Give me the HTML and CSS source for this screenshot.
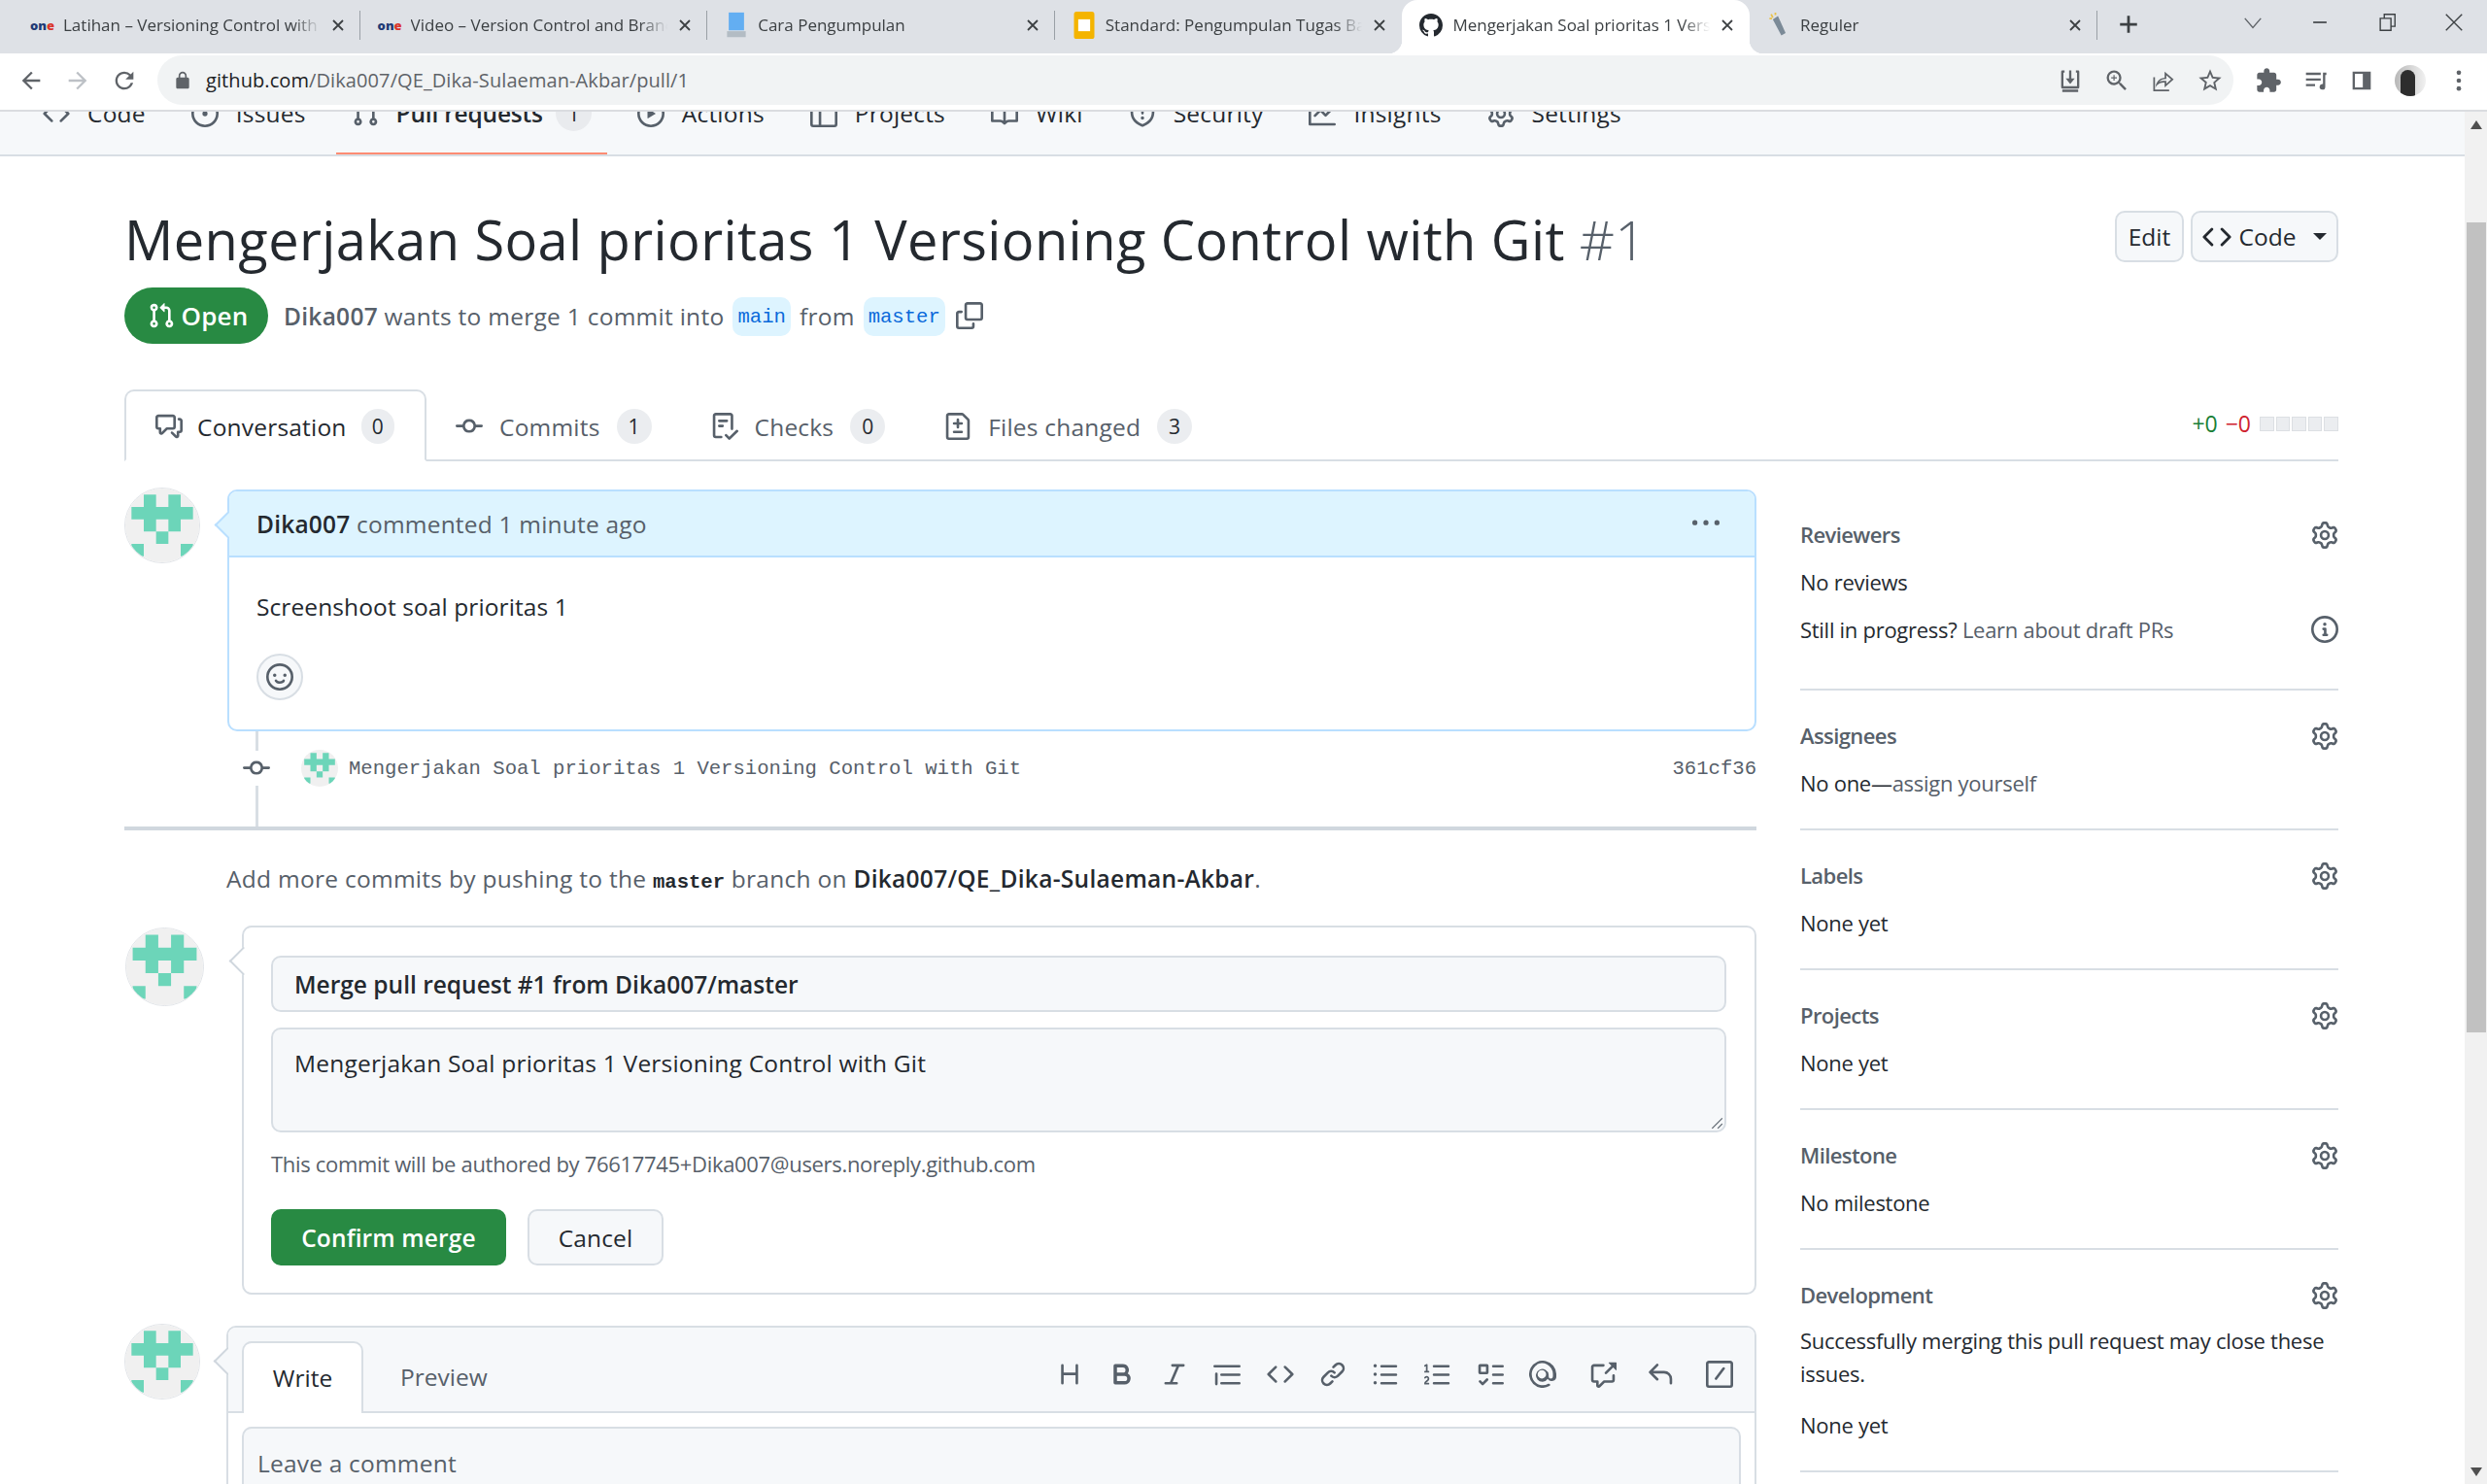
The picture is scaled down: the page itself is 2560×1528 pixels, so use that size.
FILE: index.html
```html
<!DOCTYPE html>
<html>
<head>
<title>Mengerjakan Soal prioritas 1 Versioning Control with Git</title>
<link rel="stylesheet" href="styles.css">
</head>
<body>
<svg class="defs" width="0" height="0">
  <symbol id="i-code" viewBox="0 0 16 16"><path d="M4.72 3.22a.75.75 0 0 1 1.06 1.06L2.06 8l3.72 3.72a.75.75 0 1 1-1.06 1.06L.47 8.53a.75.75 0 0 1 0-1.06l4.25-4.25zm6.56 0a.75.75 0 1 0-1.06 1.06L13.94 8l-3.72 3.72a.75.75 0 1 0 1.06 1.06l4.25-4.25a.75.75 0 0 0 0-1.06l-4.25-4.25z"/></symbol>
  <symbol id="i-issue" viewBox="0 0 16 16"><path d="M8 9.5a1.5 1.5 0 1 0 0-3 1.5 1.5 0 0 0 0 3z"/><path d="M8 0a8 8 0 1 1 0 16A8 8 0 0 1 8 0zM1.5 8a6.5 6.5 0 1 0 13 0 6.5 6.5 0 0 0-13 0z"/></symbol>
  <symbol id="i-pr" viewBox="0 0 16 16"><path d="M7.177 3.073 9.573.677A.25.25 0 0 1 10 .854v4.792a.25.25 0 0 1-.427.177L7.177 3.427a.25.25 0 0 1 0-.354ZM3.75 2.5a.75.75 0 1 0 0 1.5.75.75 0 0 0 0-1.5Zm-2.25.75a2.25 2.25 0 1 1 3 2.122v5.256a2.251 2.251 0 1 1-1.5 0V5.372A2.25 2.25 0 0 1 1.5 3.25ZM11 2.5h-1V4h1a1 1 0 0 1 1 1v5.628a2.251 2.251 0 1 0 1.5 0V5A2.5 2.5 0 0 0 11 2.5Zm1 10.25a.75.75 0 1 1 1.5 0 .75.75 0 0 1-1.5 0ZM3.75 12a.75.75 0 1 0 0 1.5.75.75 0 0 0 0-1.5Z"/></symbol>
  <symbol id="i-play" viewBox="0 0 16 16"><path d="M8 0a8 8 0 1 1 0 16A8 8 0 0 1 8 0ZM1.5 8a6.5 6.5 0 1 0 13 0 6.5 6.5 0 0 0-13 0Zm4.879-2.773 4.264 2.559a.25.25 0 0 1 0 .428l-4.264 2.559A.25.25 0 0 1 6 10.559V5.442a.25.25 0 0 1 .379-.215Z"/></symbol>
  <symbol id="i-table" viewBox="0 0 16 16"><path d="M0 1.75C0 .784.784 0 1.75 0h12.5C15.216 0 16 .784 16 1.75v12.5A1.75 1.75 0 0 1 14.25 16H1.75A1.75 1.75 0 0 1 0 14.25ZM6.5 6.5v8h7.75a.25.25 0 0 0 .25-.25V6.5Zm8-1.5V1.75a.25.25 0 0 0-.25-.25H6.5V5Zm-13 1.5v7.75c0 .138.112.25.25.25H5v-8ZM5 5V1.5H1.75a.25.25 0 0 0-.25.25V5Z"/></symbol>
  <symbol id="i-book" viewBox="0 0 16 16"><path d="M0 1.75A.75.75 0 0 1 .75 1h4.253c1.227 0 2.317.59 3 1.501A3.743 3.743 0 0 1 11.006 1h4.245a.75.75 0 0 1 .75.75v10.5a.75.75 0 0 1-.75.75h-4.507a2.25 2.25 0 0 0-1.591.659l-.622.621a.75.75 0 0 1-1.06 0l-.622-.621A2.25 2.25 0 0 0 5.258 13H.75a.75.75 0 0 1-.75-.75Zm7.251 10.324.004-5.073-.002-2.253A2.25 2.25 0 0 0 5.003 2.5H1.5v9h3.757a3.75 3.75 0 0 1 1.994.574ZM8.755 4.75l-.004 7.322a3.752 3.752 0 0 1 1.992-.572H14.5v-9h-3.495a2.25 2.25 0 0 0-2.25 2.25Z"/></symbol>
  <symbol id="i-shield" viewBox="0 0 16 16"><path d="M7.467.133a1.748 1.748 0 0 1 1.066 0l5.25 1.68A1.75 1.75 0 0 1 15 3.48V7c0 1.566-.32 3.182-1.303 4.682-.983 1.498-2.585 2.813-5.032 3.855a1.697 1.697 0 0 1-1.33 0c-2.447-1.042-4.049-2.357-5.032-3.855C1.32 10.182 1 8.566 1 7V3.48a1.75 1.75 0 0 1 1.217-1.667Zm.61 1.429a.25.25 0 0 0-.153 0l-5.25 1.68a.25.25 0 0 0-.174.238V7c0 1.358.275 2.666 1.057 3.86.784 1.194 2.121 2.34 4.366 3.297a.196.196 0 0 0 .154 0c2.245-.956 3.582-2.104 4.366-3.298C13.225 9.666 13.5 8.36 13.5 7V3.48a.251.251 0 0 0-.174-.237l-5.25-1.68ZM8.75 4.75v3a.75.75 0 0 1-1.5 0v-3a.75.75 0 0 1 1.5 0ZM9 10.5a1 1 0 1 1-2 0 1 1 0 0 1 2 0Z"/></symbol>
  <symbol id="i-graph" viewBox="0 0 16 16"><path d="M1.5 1.75V13.5h13.75a.75.75 0 0 1 0 1.5H.75a.75.75 0 0 1-.75-.75V1.75a.75.75 0 0 1 1.5 0Zm14.28 2.53-5.25 5.25a.75.75 0 0 1-1.06 0L7 7.06 4.28 9.78a.751.751 0 0 1-1.042-.018.751.751 0 0 1-.018-1.042l3.25-3.25a.75.75 0 0 1 1.06 0L10 7.94l4.72-4.72a.751.751 0 0 1 1.042.018.751.751 0 0 1 .018 1.042Z"/></symbol>
  <symbol id="i-gear" viewBox="0 0 16 16"><path d="M8 0a8.2 8.2 0 0 1 .701.031C9.444.095 9.99.645 10.16 1.29l.288 1.107c.018.066.079.158.212.224.231.114.454.243.668.386.123.082.233.09.299.071l1.103-.303c.644-.176 1.392.021 1.82.63.27.385.506.792.704 1.218.315.675.111 1.422-.364 1.891l-.814.806c-.049.048-.098.147-.088.294.016.257.016.515 0 .772-.01.147.038.246.088.294l.814.806c.475.469.679 1.216.364 1.891a7.977 7.977 0 0 1-.704 1.217c-.428.61-1.176.807-1.82.63l-1.102-.302c-.067-.019-.177-.011-.3.071a5.909 5.909 0 0 1-.668.386c-.133.066-.194.158-.211.224l-.29 1.106c-.168.646-.715 1.196-1.458 1.26a8.006 8.006 0 0 1-1.402 0c-.743-.064-1.289-.614-1.458-1.26l-.289-1.106c-.018-.066-.079-.158-.212-.224a5.738 5.738 0 0 1-.668-.386c-.123-.082-.233-.09-.299-.071l-1.103.303c-.644.176-1.392-.021-1.82-.63a8.12 8.12 0 0 1-.704-1.218c-.315-.675-.111-1.422.363-1.891l.815-.806c.05-.048.098-.147.088-.294a6.214 6.214 0 0 1 0-.772c.01-.147-.038-.246-.088-.294l-.815-.806C.635 6.045.431 5.298.746 4.623a7.92 7.92 0 0 1 .704-1.217c.428-.61 1.176-.807 1.82-.63l1.102.302c.067.019.177.011.3-.071.214-.143.437-.272.668-.386.133-.066.194-.158.211-.224l.29-1.106C6.009.645 6.556.095 7.299.03 7.53.01 7.764 0 8 0Zm-.571 1.525c-.036.003-.108.036-.137.146l-.289 1.105c-.147.561-.549.967-.998 1.189-.173.086-.34.183-.5.29-.417.278-.97.423-1.529.27l-1.103-.303c-.109-.03-.175.016-.195.045-.22.312-.412.644-.573.99-.014.031-.021.11.059.19l.815.806c.411.406.562.957.53 1.456a4.709 4.709 0 0 0 0 .582c.032.499-.119 1.05-.53 1.456l-.815.806c-.081.08-.073.159-.059.19.162.346.353.677.573.989.02.03.085.076.195.046l1.102-.303c.56-.153 1.113-.008 1.53.27.161.107.328.204.501.29.447.222.85.629.997 1.189l.289 1.105c.029.109.101.143.137.146a6.6 6.6 0 0 0 1.142 0c.036-.003.108-.036.137-.146l.289-1.105c.147-.561.549-.967.998-1.189.173-.086.34-.183.5-.29.417-.278.97-.423 1.529-.27l1.103.303c.109.029.175-.016.195-.045.22-.313.411-.644.573-.99.014-.031.021-.11-.059-.19l-.815-.806c-.411-.406-.562-.957-.53-1.456a4.709 4.709 0 0 0 0-.582c-.032-.499.119-1.05.53-1.456l.815-.806c.081-.08.073-.159.059-.19a6.464 6.464 0 0 0-.573-.989c-.02-.03-.085-.076-.195-.046l-1.102.303c-.56.153-1.113.008-1.53-.27a4.44 4.44 0 0 0-.501-.29c-.447-.222-.85-.629-.997-1.189l-.289-1.105c-.029-.11-.101-.143-.137-.146a6.6 6.6 0 0 0-1.142 0ZM11 8a3 3 0 1 1-6 0 3 3 0 0 1 6 0ZM9.5 8a1.5 1.5 0 1 0-3.001.001A1.5 1.5 0 0 0 9.5 8Z"/></symbol>
  <symbol id="i-discussion" viewBox="0 0 16 16"><path d="M1.75 1h8.5c.966 0 1.75.784 1.75 1.75v5.5A1.75 1.75 0 0 1 10.25 10H7.061l-2.574 2.573A1.458 1.458 0 0 1 2 11.543V10h-.25A1.75 1.75 0 0 1 0 8.25v-5.5C0 1.784.784 1 1.75 1ZM1.5 2.75v5.5c0 .138.112.25.25.25h1a.75.75 0 0 1 .75.75v2.19l2.72-2.72a.749.749 0 0 1 .53-.22h3.5a.25.25 0 0 0 .25-.25v-5.5a.25.25 0 0 0-.25-.25h-8.5a.25.25 0 0 0-.25.25Zm13 2a.25.25 0 0 0-.25-.25h-.5a.75.75 0 0 1 0-1.5h.5c.966 0 1.75.784 1.75 1.75v5.5A1.75 1.75 0 0 1 14.25 12H14v1.543a1.458 1.458 0 0 1-2.487 1.03L9.22 12.28a.749.749 0 0 1 .326-1.275.749.749 0 0 1 .734.215l2.22 2.22v-2.19a.75.75 0 0 1 .75-.75h1a.25.25 0 0 0 .25-.25Z"/></symbol>
  <symbol id="i-commit" viewBox="0 0 16 16"><path d="M11.93 8.5a4.002 4.002 0 0 1-7.86 0H.75a.75.75 0 0 1 0-1.5h3.32a4.002 4.002 0 0 1 7.86 0h3.32a.75.75 0 0 1 0 1.5Zm-1.43-.75a2.5 2.5 0 1 0-5 0 2.5 2.5 0 0 0 5 0Z"/></symbol>
  <symbol id="i-checklist" viewBox="0 0 16 16"><path d="M2.5 1.75v11.5c0 .138.112.25.25.25h3.17a.75.75 0 0 1 0 1.5H2.75A1.75 1.75 0 0 1 1 13.25V1.75C1 .784 1.784 0 2.75 0h8.5C12.216 0 13 .784 13 1.75v7.736a.75.75 0 0 1-1.5 0V1.75a.25.25 0 0 0-.25-.25h-8.5a.25.25 0 0 0-.25.25Zm13.274 9.537v-.001l-4.557 4.45a.75.75 0 0 1-1.055-.008l-1.943-1.95a.75.75 0 0 1 1.062-1.058l1.419 1.425 4.026-3.932a.75.75 0 1 1 1.048 1.074ZM4.75 4h4.5a.75.75 0 0 1 0 1.5h-4.5a.75.75 0 0 1 0-1.5ZM4 7.75A.75.75 0 0 1 4.75 7h2a.75.75 0 0 1 0 1.5h-2A.75.75 0 0 1 4 7.75Z"/></symbol>
  <symbol id="i-filediff" viewBox="0 0 16 16"><path d="M1 1.75C1 .784 1.784 0 2.75 0h7.586c.464 0 .909.184 1.237.513l2.914 2.914c.329.328.513.773.513 1.237v9.586A1.75 1.75 0 0 1 13.25 16H2.75A1.75 1.75 0 0 1 1 14.25Zm1.75-.25a.25.25 0 0 0-.25.25v12.5c0 .138.112.25.25.25h10.5a.25.25 0 0 0 .25-.25V4.664a.25.25 0 0 0-.073-.177l-2.914-2.914a.25.25 0 0 0-.177-.073ZM8 3.25a.75.75 0 0 1 .75.75v1.5h1.5a.75.75 0 0 1 0 1.5h-1.5v1.5a.75.75 0 0 1-1.5 0V7h-1.5a.75.75 0 0 1 0-1.5h1.5V4A.75.75 0 0 1 8 3.25Zm-3 8a.75.75 0 0 1 .75-.75h4.5a.75.75 0 0 1 0 1.5h-4.5a.75.75 0 0 1-.75-.75Z"/></symbol>
  <symbol id="i-copy" viewBox="0 0 16 16"><path d="M0 6.75C0 5.784.784 5 1.75 5h1.5a.75.75 0 0 1 0 1.5h-1.5a.25.25 0 0 0-.25.25v7.5c0 .138.112.25.25.25h7.5a.25.25 0 0 0 .25-.25v-1.5a.75.75 0 0 1 1.5 0v1.5A1.75 1.75 0 0 1 9.25 16h-7.5A1.75 1.75 0 0 1 0 14.25Z"/><path d="M5 1.75C5 .784 5.784 0 6.75 0h7.5C15.216 0 16 .784 16 1.75v7.5A1.75 1.75 0 0 1 14.25 11h-7.5A1.75 1.75 0 0 1 5 9.25Zm1.75-.25a.25.25 0 0 0-.25.25v7.5c0 .138.112.25.25.25h7.5a.25.25 0 0 0 .25-.25v-7.5a.25.25 0 0 0-.25-.25Z"/></symbol>
  <symbol id="i-smiley" viewBox="0 0 16 16"><path d="M8 0a8 8 0 1 1 0 16A8 8 0 0 1 8 0ZM1.5 8a6.5 6.5 0 1 0 13 0 6.5 6.5 0 0 0-13 0Zm3.82 1.636a.75.75 0 0 1 1.038.175l.007.009c.103.118.22.222.35.31.264.178.683.37 1.285.37.602 0 1.02-.192 1.285-.371.13-.088.247-.192.35-.31l.007-.008a.75.75 0 0 1 1.222.87c-.16.24-.5.55-.716.7-.63.418-1.37.638-2.148.638-.946 0-1.652-.308-2.126-.63a3.331 3.331 0 0 1-.715-.657.75.75 0 0 1 .161-1.096ZM12 7a1 1 0 1 1-2 0 1 1 0 0 1 2 0ZM5 8a1 1 0 1 1 0-2 1 1 0 0 1 0 2Z"/></symbol>
  <symbol id="i-kebab" viewBox="0 0 16 16"><path d="M8 9a1.5 1.5 0 1 0 0-3 1.5 1.5 0 0 0 0 3ZM1.5 9a1.5 1.5 0 1 0 0-3 1.5 1.5 0 0 0 0 3Zm13 0a1.5 1.5 0 1 0 0-3 1.5 1.5 0 0 0 0 3Z"/></symbol>
  <symbol id="i-info" viewBox="0 0 16 16"><path d="M0 8a8 8 0 1 1 16 0A8 8 0 0 1 0 8Zm8-6.5a6.5 6.5 0 1 0 0 13 6.5 6.5 0 0 0 0-13ZM6.5 7.75A.75.75 0 0 1 7.25 7h1a.75.75 0 0 1 .75.75v2.75h.25a.75.75 0 0 1 0 1.5h-2a.75.75 0 0 1 0-1.5h.25v-2h-.25a.75.75 0 0 1-.75-.75ZM8 6a1 1 0 1 1 0-2 1 1 0 0 1 0 2Z"/></symbol>
  <symbol id="i-heading" viewBox="0 0 16 16"><path d="M3.75 2a.75.75 0 0 1 .75.75V7h7V2.75a.75.75 0 0 1 1.5 0v10.5a.75.75 0 0 1-1.5 0V8.5h-7v4.75a.75.75 0 0 1-1.5 0V2.75A.75.75 0 0 1 3.75 2Z"/></symbol>
  <symbol id="i-bold" viewBox="0 0 16 16"><path d="M4 2h4.5a3.501 3.501 0 0 1 2.852 5.53A3.499 3.499 0 0 1 9.5 14H4a1 1 0 0 1-1-1V3a1 1 0 0 1 1-1Zm1 7v3h4.5a1.5 1.5 0 0 0 0-3Zm3.5-2a1.5 1.5 0 0 0 0-3H5v3Z"/></symbol>
  <symbol id="i-italic" viewBox="0 0 16 16"><path d="M6 2.75A.75.75 0 0 1 6.75 2h6.5a.75.75 0 0 1 0 1.5h-2.505l-3.858 9H9.25a.75.75 0 0 1 0 1.5h-6.5a.75.75 0 0 1 0-1.5h2.505l3.858-9H6.75A.75.75 0 0 1 6 2.75Z"/></symbol>
  <symbol id="i-quote" viewBox="0 0 16 16"><path d="M.75 2.5h14.5a.75.75 0 0 1 0 1.5H.75a.75.75 0 0 1 0-1.5Zm4 5h10.5a.75.75 0 0 1 0 1.5H4.75a.75.75 0 0 1 0-1.5Zm0 5h10.5a.75.75 0 0 1 0 1.5H4.75a.75.75 0 0 1 0-1.5ZM2.5 7.75v6a.75.75 0 0 1-1.5 0v-6a.75.75 0 0 1 1.5 0Z"/></symbol>
  <symbol id="i-link" viewBox="0 0 16 16"><path d="M7.775 3.275a.75.75 0 0 0 1.06 1.06l1.25-1.25a2 2 0 1 1 2.83 2.83l-2.5 2.5a2 2 0 0 1-2.83 0 .75.75 0 0 0-1.06 1.06 3.5 3.5 0 0 0 4.95 0l2.5-2.5a3.5 3.5 0 0 0-4.95-4.95l-1.25 1.25Zm-4.69 9.64a2 2 0 0 1 0-2.83l2.5-2.5a2 2 0 0 1 2.83 0 .75.75 0 0 0 1.06-1.06 3.5 3.5 0 0 0-4.95 0l-2.5 2.5a3.5 3.5 0 0 0 4.95 4.95l1.25-1.25a.75.75 0 0 0-1.06-1.06l-1.25 1.25a2 2 0 0 1-2.83 0Z"/></symbol>
  <symbol id="i-ul" viewBox="0 0 16 16"><path d="M5.75 2.5h8.5a.75.75 0 0 1 0 1.5h-8.5a.75.75 0 0 1 0-1.5Zm0 5h8.5a.75.75 0 0 1 0 1.5h-8.5a.75.75 0 0 1 0-1.5Zm0 5h8.5a.75.75 0 0 1 0 1.5h-8.5a.75.75 0 0 1 0-1.5ZM2 14a1 1 0 1 1 0-2 1 1 0 0 1 0 2Zm1-6a1 1 0 1 1-2 0 1 1 0 0 1 2 0ZM2 4a1 1 0 1 1 0-2 1 1 0 0 1 0 2Z"/></symbol>
  <symbol id="i-ol" viewBox="0 0 16 16"><path d="M5 3.25a.75.75 0 0 1 .75-.75h8.5a.75.75 0 0 1 0 1.5h-8.5A.75.75 0 0 1 5 3.25Zm0 5a.75.75 0 0 1 .75-.75h8.5a.75.75 0 0 1 0 1.5h-8.5A.75.75 0 0 1 5 8.25Zm0 5a.75.75 0 0 1 .75-.75h8.5a.75.75 0 0 1 0 1.5h-8.5a.75.75 0 0 1-.75-.75ZM.924 10.32a.5.5 0 0 1-.851-.525c.097-.144.215-.273.348-.384.228-.19.588-.392 1.068-.392.468 0 .858.181 1.126.484.259.294.377.673.377 1.038 0 .987-.686 1.495-1.156 1.845l-.047.035c-.303.225-.522.4-.654.597h1.357a.5.5 0 0 1 0 1H.5a.5.5 0 0 1-.5-.5c0-1.005.692-1.52 1.167-1.875l.035-.025c.531-.396.8-.625.8-1.078a.57.57 0 0 0-.128-.376C1.806 10.068 1.695 10 1.5 10a.658.658 0 0 0-.429.163.835.835 0 0 0-.144.153ZM2.003 2.5V6h.503a.5.5 0 0 1 0 1H.5a.5.5 0 0 1 0-1h.503V3.308l-.28.14a.5.5 0 0 1-.446-.895l1.003-.5a.5.5 0 0 1 .723.447Z"/></symbol>
  <symbol id="i-task" viewBox="0 0 16 16"><path d="M2 2h4a1 1 0 0 1 1 1v4a1 1 0 0 1-1 1H2a1 1 0 0 1-1-1V3a1 1 0 0 1 1-1Zm4.655 8.595a.75.75 0 0 1 0 1.06L4.03 14.28a.75.75 0 0 1-1.06 0l-1.5-1.5a.749.749 0 0 1 .326-1.275.749.749 0 0 1 .734.215l.97.97 2.095-2.095a.75.75 0 0 1 1.06 0ZM9.75 2.5h5.5a.75.75 0 0 1 0 1.5h-5.5a.75.75 0 0 1 0-1.5Zm0 5h5.5a.75.75 0 0 1 0 1.5h-5.5a.75.75 0 0 1 0-1.5Zm0 5h5.5a.75.75 0 0 1 0 1.5h-5.5a.75.75 0 0 1 0-1.5Zm-7.25-9v3h3v-3Z"/></symbol>
  <symbol id="i-mention" viewBox="0 0 16 16"><path d="M4.75 2.37a6.501 6.501 0 0 0 6.5 11.26.75.75 0 0 1 .75 1.298A7.999 7.999 0 0 1 .989 4.148 8 8 0 0 1 16 7.75v1.5a2.75 2.75 0 0 1-5.072 1.475 3.75 3.75 0 1 1 .572-2.475v1a1.25 1.25 0 0 0 2.5 0v-1.5a6.5 6.5 0 0 0-9.75-5.38ZM10 8a2.5 2.5 0 1 0-5 0 2.5 2.5 0 0 0 5 0Z"/></symbol>
  <symbol id="i-xref" viewBox="0 0 16 16"><path d="M2.75 3.5a.25.25 0 0 0-.25.25v7.5c0 .138.112.25.25.25h2a.75.75 0 0 1 .75.75v2.19l2.72-2.72a.749.749 0 0 1 .53-.22h4.5a.25.25 0 0 0 .25-.25v-2.5a.75.75 0 0 1 1.5 0v2.5A1.75 1.75 0 0 1 13.25 13H9.06l-2.573 2.573A1.458 1.458 0 0 1 4 14.543V13H2.75A1.75 1.75 0 0 1 1 11.25v-7.5C1 2.784 1.784 2 2.75 2h5.5a.75.75 0 0 1 0 1.5ZM16 1.25v4.146a.25.25 0 0 1-.427.177L14.03 4.03l-3.75 3.75a.749.749 0 0 1-1.275-.326.749.749 0 0 1 .215-.734l3.75-3.75-1.543-1.543A.25.25 0 0 1 11.604 1h4.146a.25.25 0 0 1 .25.25Z"/></symbol>
  <symbol id="i-reply" viewBox="0 0 16 16"><path d="M6.78 1.97a.75.75 0 0 1 0 1.06L3.81 6h6.44A4.75 4.75 0 0 1 15 10.75v2.5a.75.75 0 0 1-1.5 0v-2.5a3.25 3.25 0 0 0-3.25-3.25H3.81l2.97 2.97a.749.749 0 0 1-.326 1.275.749.749 0 0 1-.734-.215L1.47 7.28a.75.75 0 0 1 0-1.06l4.25-4.25a.75.75 0 0 1 1.06 0Z"/></symbol>
  <symbol id="i-slash" viewBox="0 0 16 16"><path d="M0 1.75C0 .784.784 0 1.75 0h12.5C15.216 0 16 .784 16 1.75v12.5A1.75 1.75 0 0 1 14.25 16H1.75A1.75 1.75 0 0 1 0 14.25Zm1.75-.25a.25.25 0 0 0-.25.25v12.5c0 .138.112.25.25.25h12.5a.25.25 0 0 0 .25-.25V1.75a.25.25 0 0 0-.25-.25Zm9.28 3.53-4.5 6a.75.75 0 0 1-1.2-.9l4.5-6a.75.75 0 0 1 1.2.9Z"/></symbol>
  <symbol id="i-close" viewBox="0 0 16 16"><path d="M3 3l10 10M13 3L3 13" fill="none" stroke="currentColor" stroke-width="1.8"/></symbol>
  <symbol id="identicon" viewBox="0 0 6 6"><rect width="6" height="6" fill="#f0f0f0"/><path fill="#6cd5b9" d="M1.5.5h1v1h-1zM3.5.5h1v1h-1zM.5 1.5h5v1h-5zM1.5 2.5h1v1h-1zM3.5 2.5h1v1h-1zM2.5 3.5h1v1h-1zM.5 4.5h1v1h-1zM4.5 4.5h1v1h-1z"/></symbol>
</svg>

<div class="tabstrip">
  <div class="tab">
    <span class="fav-one">on<b>e</b></span>
    <span class="tab-title">Latihan – Versioning Control with Git</span>
    <svg class="tab-close"><use href="#i-close"/></svg>
  </div>
  <div class="tab">
    <span class="fav-one">on<b>e</b></span>
    <span class="tab-title">Video – Version Control and Branch</span>
    <svg class="tab-close"><use href="#i-close"/></svg>
  </div>
  <div class="tab">
    <svg class="favicon" viewBox="0 0 24 32"><rect x="3" y="1" width="18" height="21" fill="#63aef2"/><rect x="1" y="23" width="22" height="7" fill="#b3bcc4"/></svg>
    <span class="tab-title">Cara Pengumpulan</span>
    <svg class="tab-close"><use href="#i-close"/></svg>
  </div>
  <div class="tab">
    <svg class="favicon" viewBox="0 0 24 32"><rect width="24" height="32" rx="3" fill="#f4b400"/><rect x="5" y="9" width="14" height="14" fill="#fff"/></svg>
    <span class="tab-title">Standard: Pengumpulan Tugas Batch</span>
    <svg class="tab-close"><use href="#i-close"/></svg>
  </div>
  <div class="tab tab-active">
    <svg class="favicon gh" viewBox="0 0 16 16"><path d="M8 0c4.42 0 8 3.58 8 8a8.013 8.013 0 0 1-5.45 7.59c-.4.08-.55-.17-.55-.38 0-.27.01-1.13.01-2.2 0-.75-.25-1.23-.54-1.48 1.78-.2 3.65-.88 3.65-3.95 0-.88-.31-1.59-.82-2.15.08-.2.36-1.02-.08-2.12 0 0-.67-.22-2.2.82-.64-.18-1.32-.27-2-.27-.68 0-1.36.09-2 .27-1.53-1.03-2.2-.82-2.2-.82-.44 1.1-.16 1.92-.08 2.12-.51.56-.82 1.28-.82 2.15 0 3.06 1.86 3.75 3.64 3.95-.23.2-.44.55-.51 1.07-.46.21-1.61.55-2.33-.66-.15-.24-.6-.83-1.23-.82-.67.01-.27.38.01.53.34.19.73.9.82 1.13.16.45.68 1.31 2.69.94 0 .67.01 1.3.01 1.49 0 .21-.15.45-.55.37A7.995 7.995 0 0 1 0 8c0-4.42 3.58-8 8-8Z"/></svg>
    <span class="tab-title">Mengerjakan Soal prioritas 1 Versioning</span>
    <svg class="tab-close"><use href="#i-close"/></svg>
  </div>
  <div class="tab">
    <svg class="favicon" viewBox="0 0 24 32"><path d="M5 9l6-4 9 20-5 3z" fill="#7b8a97"/><path d="M3 3l2 4M8 1l0 3M1 8l3 0" stroke="#e8c14a" stroke-width="2"/></svg>
    <span class="tab-title">Reguler</span>
    <svg class="tab-close"><use href="#i-close"/></svg>
  </div>
  <svg class="new-tab" viewBox="0 0 16 16"><path d="M8 1v14M1 8h14" stroke="#3c4043" stroke-width="2.2"/></svg>
  <div class="window-controls">
    <svg viewBox="0 0 16 16"><path d="M2 5l6 7 6-7" fill="none" stroke="#5f6368" stroke-width="1"/></svg>
    <svg viewBox="0 0 16 16"><path d="M3 8h10" stroke="#3c4043" stroke-width="1.2"/></svg>
    <svg viewBox="0 0 16 16"><path d="M3 5h8v9H3zM6 5V2h8v9h-3" fill="none" stroke="#3c4043" stroke-width="1"/></svg>
    <svg viewBox="0 0 16 16"><path d="M2 2l12 12M14 2L2 14" stroke="#3c4043" stroke-width="1"/></svg>
  </div>
</div>

<div class="toolbar">
  <svg class="tb-icon" viewBox="0 0 24 24"><path d="M20 11H7.83l5.59-5.59L12 4l-8 8 8 8 1.41-1.41L7.83 13H20v-2z"/></svg>
  <svg class="tb-icon off" viewBox="0 0 24 24"><path d="M12 4l-1.41 1.41L16.17 11H4v2h12.17l-5.58 5.59L12 20l8-8z"/></svg>
  <svg class="tb-icon" viewBox="0 0 24 24"><path d="M17.65 6.35A7.958 7.958 0 0 0 12 4c-4.42 0-7.99 3.58-7.99 8s3.57 8 7.99 8c3.73 0 6.84-2.55 7.73-6h-2.08A5.99 5.99 0 0 1 12 18c-3.31 0-6-2.69-6-6s2.69-6 6-6c1.66 0 3.14.69 4.22 1.78L13 11h7V4l-2.35 2.35z"/></svg>
  <div class="omnibox">
    <svg class="lock" viewBox="0 0 24 24"><path d="M18 8h-1V6c0-2.76-2.24-5-5-5S7 3.24 7 6v2H6c-1.1 0-2 .9-2 2v10c0 1.1.9 2 2 2h12c1.1 0 2-.9 2-2V10c0-1.1-.9-2-2-2zM9 6c0-1.66 1.34-3 3-3s3 1.34 3 3v2H9V6z"/></svg>
    <span class="url"><span class="url-host">github.com</span>/Dika007/QE_Dika-Sulaeman-Akbar/pull/1</span>
    <div class="omni-actions">
      <svg class="tb-icon" viewBox="0 0 24 24"><path d="M5 3h2v2H6v12h12V5h-1V3h2a1 1 0 0 1 1 1v14a1 1 0 0 1-1 1H5a1 1 0 0 1-1-1V4a1 1 0 0 1 1-1zM11 3h2v7h3l-4 5-4-5h3zM5 20h14v2H5z"/></svg>
      <svg class="tb-icon" viewBox="0 0 24 24"><path d="M15.5 14h-.79l-.28-.27A6.47 6.47 0 0 0 16 9.5 6.5 6.5 0 1 0 9.5 16c1.61 0 3.09-.59 4.23-1.57l.27.28v.79l5 4.99L20.49 19l-4.99-5zm-6 0C7.01 14 5 11.99 5 9.5S7.01 5 9.5 5 14 7.01 14 9.5 11.99 14 9.5 14zM12 10h-2v2H9v-2H7V9h2V7h1v2h2v1z"/></svg>
      <svg class="tb-icon" viewBox="0 0 24 24"><path d="M13 4l8 7-8 7v-4.2c-3.6 0-6 1-8 4.2.4-4.6 3-8 8-8.6zM14.5 7.3v3.3c-3 .1-5 1-6.500 2.600 1.500-.8 3.600-1 6.500-.9v2.400l4.200-3.700zM3 20h14v1.500H3zM3 9h1.500v11.500H3z"/></svg>
      <svg class="tb-icon" viewBox="0 0 24 24"><path d="M22 9.24l-7.19-.62L12 2 9.19 8.63 2 9.24l5.46 4.73L5.82 21 12 17.27 18.18 21l-1.63-7.03L22 9.24zM12 15.4l-3.76 2.27 1-4.28-3.32-2.88 4.38-.38L12 6.1l1.71 4.04 4.38.38-3.32 2.88 1 4.28L12 15.4z"/></svg>
    </div>
  </div>
  <div class="browser-actions">
    <svg class="tb-icon" viewBox="0 0 24 24"><path d="M20.5 11H19V7c0-1.1-.9-2-2-2h-4V3.5C13 2.12 11.88 1 10.5 1S8 2.12 8 3.5V5H4c-1.1 0-1.99.9-1.99 2v3.8H3.5c1.49 0 2.7 1.21 2.7 2.7s-1.21 2.7-2.7 2.7H2V20c0 1.1.9 2 2 2h3.8v-1.5c0-1.49 1.21-2.7 2.7-2.7 1.49 0 2.7 1.21 2.7 2.7V22H17c1.1 0 2-.9 2-2v-4h1.5c1.38 0 2.5-1.12 2.5-2.5S21.88 11 20.5 11z"/></svg>
    <svg class="tb-icon" viewBox="0 0 24 24"><path d="M4 5h13v2H4zM4 10h13v2H4zM4 15h8v2H4zM19 5h3v2h-1v10.5a2.5 2.5 0 1 1-2-2.45z"/></svg>
    <svg class="tb-icon" viewBox="0 0 24 24"><path d="M4 4h16v16H4zM6 6v12h7V6z" fill-rule="evenodd"/></svg>
    <span class="profile"><span class="profile-shape"></span></span>
    <svg class="tb-icon" viewBox="0 0 24 24"><circle cx="12" cy="5" r="2"/><circle cx="12" cy="12" r="2"/><circle cx="12" cy="19" r="2"/></svg>
  </div>
</div>

<div class="viewport">
  <div class="page">
    <nav class="repo-nav">
      <div class="nav-items">
        <a class="nav-item"><svg class="octicon"><use href="#i-code"/></svg>Code</a>
        <a class="nav-item"><svg class="octicon"><use href="#i-issue"/></svg>Issues</a>
        <a class="nav-item selected"><svg class="octicon"><use href="#i-pr"/></svg>Pull requests<span class="nav-counter">1</span></a>
        <a class="nav-item"><svg class="octicon"><use href="#i-play"/></svg>Actions</a>
        <a class="nav-item"><svg class="octicon"><use href="#i-table"/></svg>Projects</a>
        <a class="nav-item"><svg class="octicon"><use href="#i-book"/></svg>Wiki</a>
        <a class="nav-item"><svg class="octicon"><use href="#i-shield"/></svg>Security</a>
        <a class="nav-item"><svg class="octicon"><use href="#i-graph"/></svg>Insights</a>
        <a class="nav-item"><svg class="octicon"><use href="#i-gear"/></svg>Settings</a>
      </div>
    </nav>

    <div class="content">
      <div class="title-row">
        <h1 class="pr-title">Mengerjakan Soal prioritas 1 Versioning Control with Git <span class="pr-number">#1</span></h1>
        <div class="title-actions">
          <button class="btn btn-edit">Edit</button>
          <button class="btn btn-code"><svg class="octicon"><use href="#i-code"/></svg>Code<span class="caret-down"></span></button>
        </div>
      </div>

      <div class="meta-row">
        <span class="state-open"><svg class="octicon"><use href="#i-pr"/></svg>Open</span>
        <span class="meta-text"><b class="meta-author">Dika007</b> wants to merge 1 commit into</span>
        <code class="branch">main</code>
        <span class="meta-text">from</span>
        <code class="branch">master</code>
        <svg class="octicon copy"><use href="#i-copy"/></svg>
      </div>

      <div class="pr-tabs">
        <a class="pr-tab active"><svg class="octicon"><use href="#i-discussion"/></svg>Conversation<span class="counter">0</span></a>
        <a class="pr-tab"><svg class="octicon"><use href="#i-commit"/></svg>Commits<span class="counter">1</span></a>
        <a class="pr-tab"><svg class="octicon"><use href="#i-checklist"/></svg>Checks<span class="counter">0</span></a>
        <a class="pr-tab"><svg class="octicon"><use href="#i-filediff"/></svg>Files changed<span class="counter">3</span></a>
        <div class="diffstat">
          <span class="added">+0</span><span class="removed">−0</span>
          <span class="diff-blocks"><i></i><i></i><i></i><i></i><i></i></span>
        </div>
      </div>

      <div class="columns">
        <div class="discussion">
          <div class="comment-row">
            <svg class="avatar"><use href="#identicon"/></svg>
            <div class="comment-box">
              <div class="comment-head">
                <span><b class="comment-author">Dika007</b> commented 1 minute ago</span>
                <svg class="octicon"><use href="#i-kebab"/></svg>
              </div>
              <div class="comment-body">
                <p>Screenshoot soal prioritas 1</p>
                <span class="reaction"><svg class="octicon"><use href="#i-smiley"/></svg></span>
              </div>
            </div>
          </div>

          <div class="timeline">
            <svg class="octicon commit-node"><use href="#i-commit"/></svg>
            <svg class="commit-avatar"><use href="#identicon"/></svg>
            <span class="commit-msg">Mengerjakan Soal prioritas 1 Versioning Control with Git</span>
            <span class="commit-sha">361cf36</span>
          </div>
          <div class="timeline-break"></div>

          <p class="more-commits">Add more commits by pushing to the <code>master</code> branch on <b>Dika007/QE_Dika-Sulaeman-Akbar</b>.</p>

          <div class="merge-row">
            <svg class="avatar avatar-lg"><use href="#identicon"/></svg>
            <div class="merge-box">
              <div class="field field-title">Merge pull request #1 from Dika007/master</div>
              <div class="field field-message">Mengerjakan Soal prioritas 1 Versioning Control with Git
                <svg class="resize-grip" viewBox="0 0 12 12"><path d="M11 2L2 11M11 7l-4 4" stroke="#57606a" stroke-width="1" fill="none"/></svg>
              </div>
              <p class="merge-note">This commit will be authored by 76617745+Dika007@users.noreply.github.com</p>
              <div class="merge-actions">
                <button class="btn btn-confirm">Confirm merge</button>
                <button class="btn btn-cancel">Cancel</button>
              </div>
            </div>
          </div>

          <div class="form-row">
            <svg class="avatar"><use href="#identicon"/></svg>
            <div class="form-box">
              <div class="form-head">
                <span class="form-tab active">Write</span>
                <span class="form-tab">Preview</span>
                <div class="md-tools">
                  <svg class="octicon"><use href="#i-heading"/></svg>
                  <svg class="octicon"><use href="#i-bold"/></svg>
                  <svg class="octicon"><use href="#i-italic"/></svg>
                  <svg class="octicon"><use href="#i-quote"/></svg>
                  <svg class="octicon"><use href="#i-code"/></svg>
                  <svg class="octicon"><use href="#i-link"/></svg>
                  <svg class="octicon"><use href="#i-ul"/></svg>
                  <svg class="octicon"><use href="#i-ol"/></svg>
                  <svg class="octicon"><use href="#i-task"/></svg>
                  <svg class="octicon"><use href="#i-mention"/></svg>
                  <svg class="octicon wide"><use href="#i-xref"/></svg>
                  <svg class="octicon tool-reply"><use href="#i-reply"/></svg>
                  <svg class="octicon wide"><use href="#i-slash"/></svg>
                </div>
              </div>
              <div class="form-body">
                <div class="comment-input">Leave a comment</div>
              </div>
            </div>
          </div>
        </div>

        <aside class="sidebar">
          <section class="side-item side-first">
            <div class="side-head">Reviewers<svg class="octicon"><use href="#i-gear"/></svg></div>
            <p class="side-value">No reviews</p>
            <p class="side-value side-draft"><span>Still in progress? <a>Learn about draft PRs</a></span><svg class="octicon"><use href="#i-info"/></svg></p>
          </section>
          <section class="side-item">
            <div class="side-head">Assignees<svg class="octicon"><use href="#i-gear"/></svg></div>
            <p class="side-value">No one—<a>assign yourself</a></p>
          </section>
          <section class="side-item">
            <div class="side-head">Labels<svg class="octicon"><use href="#i-gear"/></svg></div>
            <p class="side-value">None yet</p>
          </section>
          <section class="side-item">
            <div class="side-head">Projects<svg class="octicon"><use href="#i-gear"/></svg></div>
            <p class="side-value">None yet</p>
          </section>
          <section class="side-item">
            <div class="side-head">Milestone<svg class="octicon"><use href="#i-gear"/></svg></div>
            <p class="side-value">No milestone</p>
          </section>
          <section class="side-item">
            <div class="side-head">Development<svg class="octicon"><use href="#i-gear"/></svg></div>
            <p class="side-value side-dev">Successfully merging this pull request may close these issues.</p>
            <p class="side-value side-none">None yet</p>
          </section>
        </aside>
      </div>
    </div>
  </div>

  <div class="scrollbar">
    <span class="arrow-up"></span>
    <span class="thumb"></span>
    <span class="arrow-down"></span>
  </div>
</div>
</body>
</html>
```

FILE: styles.css
```css
* {
  box-sizing: border-box;
}

body {
  margin: 0;
  width: 2560px;
  height: 1528px;
  overflow: hidden;
  display: flex;
  flex-direction: column;
  background-color: #fff;
  color: #24292f;
  font-family: "Open Sans", "Noto Sans", sans-serif;
  font-size: 24.5px;
  letter-spacing: 0.2px;
}

p {
  margin: 0;
}

.defs {
  position: absolute;
}

.octicon {
  width: 28px;
  height: 28px;
  flex: none;
  fill: #57606a;
}

/* browser chrome */
.tabstrip {
  height: 55px;
  flex: none;
  display: flex;
  padding-left: 13px;
  background-color: #dee1e6;
  color: #3c4043;
  font-size: 17px;
  letter-spacing: 0;
}

.tab {
  width: 357.6px;
  height: 55px;
  flex: none;
  display: flex;
  align-items: center;
  padding: 0 15px 4px 18px;
  gap: 10px;
  position: relative;
}

.tab::after {
  content: "";
  position: absolute;
  right: 0;
  top: 11px;
  height: 30px;
  border-right: 1px solid #9aa0a6;
}

.tab:nth-child(4)::after {
  border-right: none;
}

.tab-active {
  background-color: #fff;
  border-radius: 16px 16px 0 0;
}

.tab-active::before,
.tab-active::after {
  content: "";
  position: absolute;
  top: auto;
  bottom: 0;
  width: 14px;
  height: 14px;
  border: none;
}

.tab-active::before {
  left: -14px;
  background: radial-gradient(circle at 0 0, transparent 14px, #fff 14.5px);
}

.tab-active::after {
  right: -14px;
  background: radial-gradient(circle at 100% 0, transparent 14px, #fff 14.5px);
}

.tab-title {
  flex: 1;
  white-space: nowrap;
  overflow: hidden;
  -webkit-mask-image: linear-gradient(to left, transparent, #000 28px);
  mask-image: linear-gradient(to left, transparent, #000 28px);
}

.tab-close {
  width: 16px;
  height: 16px;
  flex: none;
  color: #3c4043;
}

.favicon {
  width: 24px;
  height: 28px;
  flex: none;
}

.favicon.gh {
  fill: #24292f;
  height: 24px;
}

.fav-one {
  width: 24px;
  flex: none;
  color: #1f3a75;
  font-size: 13px;
  font-weight: 800;
  text-align: center;
}

.fav-one b {
  color: #d9352c;
}

.new-tab {
  width: 20px;
  height: 20px;
  flex: none;
  margin: 15px 0 0 22px;
}

.window-controls {
  display: flex;
  margin-left: 107px;
  gap: 47px;
  padding-top: 12px;
}

.window-controls svg {
  width: 22px;
  height: 22px;
}

.toolbar {
  height: 60px;
  flex: none;
  display: flex;
  align-items: center;
  padding: 0 0 3px 18px;
  border-bottom: 2px solid #dadce0;
  gap: 20px;
}

.tb-icon {
  width: 28px;
  height: 28px;
  flex: none;
  fill: #5f6368;
}

.tb-icon.off {
  fill: #bdc1c6;
}

.omnibox {
  width: 2137px;
  height: 51px;
  display: flex;
  align-items: center;
  padding-left: 16px;
  border-radius: 26px;
  background-color: #f1f3f4;
  font-size: 20px;
  letter-spacing: 0.09px;
  color: #5f6368;
}

.lock {
  width: 20px;
  height: 20px;
  fill: #5f6368;
  margin-right: 14px;
}

.url-host {
  color: #202124;
}

.omni-actions {
  margin-left: auto;
  display: flex;
  gap: 20px;
  padding-right: 10px;
}

.browser-actions {
  display: flex;
  align-items: center;
  gap: 20px;
  margin-left: 2px;
}

.profile {
  width: 32px;
  height: 32px;
  flex: none;
  border-radius: 50%;
  background: linear-gradient(to right, #b8b8b8, #f1f1f1);
  overflow: hidden;
  display: flex;
  padding-left: 6px;
}

.profile-shape {
  width: 15px;
  height: 28px;
  margin-top: 5px;
  border-radius: 8px 8px 0 0;
  background-color: #2d2d2d;
}

/* page */
.viewport {
  flex: 1;
  display: flex;
  min-height: 0;
}

.page {
  flex: 1;
  min-width: 0;
  overflow: hidden;
}

.scrollbar {
  width: 23px;
  flex: none;
  display: flex;
  flex-direction: column;
  align-items: center;
  background-color: #f1f1f1;
  padding: 9px 0 8px;
}

.arrow-up,
.arrow-down {
  width: 0;
  height: 0;
  border-left: 6px solid transparent;
  border-right: 6px solid transparent;
}

.arrow-up {
  border-bottom: 9px solid #505050;
}

.arrow-down {
  margin-top: auto;
  border-top: 9px solid #505050;
}

.thumb {
  width: 20px;
  height: 834px;
  margin-top: 96px;
  background-color: #c1c1c1;
}

.repo-nav {
  height: 46px;
  overflow: hidden;
  background-color: #f6f8fa;
  border-bottom: 2px solid #d8dee4;
}

.nav-items {
  display: flex;
  gap: 15px;
  height: 64px;
  margin-top: -18px;
  padding-left: 28px;
}

.nav-item {
  display: flex;
  align-items: flex-start;
  gap: 18px;
  height: 64px;
  padding: 0 16px;
  line-height: 40px;
  border-bottom: 4px solid transparent;
}

.nav-item .octicon {
  margin-top: 6px;
}

.nav-item.selected {
  font-weight: 600;
  letter-spacing: -0.2px;
  border-bottom-color: #fd8c73;
}

.nav-counter {
  width: 37px;
  height: 38px;
  margin-left: -5px;
  border-radius: 19px;
  background-color: #e9ebee;
  font-size: 21px;
  font-weight: 400;
  line-height: 40px;
  text-align: center;
}

.content {
  padding: 43px 130px 0 128px;
}

.title-row {
  display: flex;
  justify-content: space-between;
}

.pr-title {
  margin: 0;
  font-size: 56px;
  font-weight: 400;
  line-height: 84px;
  letter-spacing: 0.4px;
}

.pr-number {
  color: #57606a;
  font-weight: 300;
}

.title-actions {
  display: flex;
  gap: 7px;
  padding-top: 13px;
}

.btn {
  display: inline-flex;
  align-items: center;
  justify-content: center;
  height: 53px;
  border: 2px solid #d8dee4;
  border-radius: 10px;
  background-color: #f6f8fa;
  color: #24292f;
  font-family: inherit;
  font-size: 24.5px;
  font-weight: 500;
  letter-spacing: 0;
  padding: 0;
}

.btn-edit {
  width: 71px;
}

.btn-code {
  width: 152px;
  gap: 8px;
}

.btn-code .octicon {
  fill: #24292f;
  width: 30px;
  height: 30px;
}

.caret-down {
  margin-left: 10px;
  border-left: 7px solid transparent;
  border-right: 7px solid transparent;
  border-top: 7px solid #24292f;
}

.meta-row {
  display: flex;
  align-items: center;
  margin-top: 8px;
  height: 58px;
  color: #57606a;
}

.meta-text {
  letter-spacing: 0.27px;
}

.state-open {
  display: flex;
  align-items: center;
  justify-content: center;
  gap: 7px;
  width: 148px;
  height: 58px;
  margin-right: 16px;
  padding-left: 3px;
  border-radius: 29px;
  background-color: #288a43;
  color: #fff;
  font-size: 26px;
  font-weight: 600;
}

.state-open .octicon {
  fill: #fff;
}

.meta-author {
  font-weight: 600;
}

.branch {
  height: 40px;
  margin: 2px 9px 0;
  padding: 0 5px;
  border-radius: 10px;
  background-color: #ddf4ff;
  color: #0969da;
  font-family: "Liberation Mono", monospace;
  font-size: 20.6px;
  letter-spacing: 0;
  line-height: 42px;
}

.copy {
  margin-left: 2px;
}

.pr-tabs {
  display: flex;
  align-items: flex-end;
  height: 74px;
  margin-top: 47px;
  border-bottom: 2px solid #d8dee4;
}

.pr-tab {
  display: flex;
  align-items: center;
  gap: 17px;
  height: 74px;
  padding: 2px 31px 0 30px;
  color: #57606a;
  margin-bottom: -2px;
}

.pr-tab.active {
  width: 311px;
  gap: 15px;
  border: 2px solid #d8dee4;
  border-bottom-color: #fff;
  border-radius: 10px 10px 0 0;
  color: #24292f;
}

.counter {
  width: 36px;
  height: 36px;
  margin-left: 0;
  border-radius: 18px;
  background-color: #ebedf0;
  color: #24292f;
  font-size: 21px;
  line-height: 36px;
  text-align: center;
}

.diffstat {
  display: flex;
  align-items: center;
  margin-left: auto;
  height: 70px;
  padding-bottom: 4px;
  gap: 8px;
  font-size: 23px;
  letter-spacing: 0;
}

.added {
  color: #1a7f37;
}

.removed {
  color: #cf222e;
}

.diff-blocks {
  display: flex;
  gap: 2px;
  margin-left: 1px;
}

.diff-blocks i {
  width: 14.6px;
  height: 15px;
  background-color: #ebedf0;
  border: 1px solid #dcdfe3;
}

.columns {
  display: grid;
  grid-template-columns: 1680px 554px;
  column-gap: 45px;
  margin-top: 29px;
}

.avatar {
  width: 78px;
  height: 78px;
  flex: none;
  border-radius: 50%;
  border: 1px solid #e1e4e8;
  margin-top: -2px;
}

.comment-row {
  display: flex;
}

.comment-box {
  width: 1574px;
  height: 249px;
  margin-left: 28px;
  position: relative;
  border: 2px solid #b9dfff;
  border-radius: 10px;
}

.comment-box::before,
.merge-box::before,
.form-box::before {
  content: "";
  position: absolute;
  top: 24px;
  left: -11px;
  width: 19px;
  height: 19px;
  transform: rotate(45deg);
  background-color: #ddf4ff;
  border-left: 2px solid #b9dfff;
  border-bottom: 2px solid #b9dfff;
}

.comment-head {
  display: flex;
  align-items: center;
  justify-content: space-between;
  height: 68px;
  padding: 0 36px 0 28px;
  position: relative;
  border-radius: 8px 8px 0 0;
  background-color: #ddf4ff;
  border-bottom: 2px solid #b9dfff;
  color: #57606a;
}

.comment-author {
  font-weight: 600;
  color: #24292f;
}

.comment-body {
  padding: 34px 28px 0;
}

.comment-body p {
  line-height: 34px;
  letter-spacing: 0.1px;
}

.reaction {
  display: flex;
  align-items: center;
  justify-content: center;
  width: 48px;
  height: 48px;
  margin-top: 31px;
  border-radius: 50%;
  border: 2px solid #d8dee4;
  background-color: #f6f8fa;
}

.timeline {
  display: flex;
  align-items: center;
  height: 98px;
  margin-left: 135px;
  padding-bottom: 22px;
  border-left: 3px solid #d8dee4;
  font-family: "Liberation Mono", monospace;
  font-size: 20.6px;
  letter-spacing: 0;
  color: #57606a;
}

.commit-node {
  margin-left: -16px;
  padding: 4px 0;
  height: 36px;
  background-color: #fff;
}

.commit-avatar {
  width: 38px;
  height: 38px;
  flex: none;
  margin: 0 11px 0 32px;
  border-radius: 50%;
}

.commit-sha {
  margin-left: auto;
}

.timeline-break {
  border-top: 4px solid #d0d7de;
}

.more-commits {
  margin: 33px 0 0 105px;
  line-height: 34px;
  letter-spacing: 0.28px;
  color: #57606a;
}

.more-commits code {
  font-family: "Liberation Mono", monospace;
  font-size: 20.6px;
  font-weight: 700;
  letter-spacing: 0;
  color: #24292f;
}

.more-commits b {
  font-weight: 600;
  color: #24292f;
}

.merge-row {
  display: flex;
  margin-top: 27px;
}

.avatar-lg {
  width: 81px;
  height: 81px;
  margin: 2px 0 0 1px;
}

.merge-box {
  flex: 1;
  height: 380px;
  margin-left: 39px;
  position: relative;
  padding: 29px 29px 0 28px;
  border: 2px solid #d8dee4;
  border-radius: 10px;
  background-color: #fff;
}

.merge-box::before,
.form-box::before {
  background-color: #fff;
  border-color: #d0d7de;
}

.form-box::before {
  background-color: #f6f8fa;
}

.field {
  position: relative;
  padding: 0 22px;
  border: 2px solid #d8dee4;
  border-radius: 10px;
  background-color: #f6f8fa;
}

.field-title {
  height: 58px;
  line-height: 56px;
  font-weight: 600;
  letter-spacing: 0;
}

.field-message {
  height: 108px;
  margin-top: 16px;
  padding-top: 18px;
  line-height: 34px;
}

.resize-grip {
  position: absolute;
  right: 1px;
  bottom: 1px;
  width: 14px;
  height: 14px;
}

.merge-note {
  margin-top: 17px;
  font-size: 22px;
  line-height: 30px;
  letter-spacing: -0.32px;
  color: #57606a;
}

.merge-actions {
  display: flex;
  gap: 22px;
  margin-top: 32px;
}

.btn-confirm,
.btn-cancel {
  height: 58px;
  font-size: 24.5px;
  font-weight: 600;
  letter-spacing: 0.14px;
}

.btn-confirm {
  width: 242px;
  background-color: #288a43;
  border-color: #288a43;
  color: #fff;
}

.btn-cancel {
  width: 140px;
  font-weight: 500;
}

.form-row {
  display: flex;
  margin-top: 32px;
}

.form-box {
  width: 1575px;
  height: 300px;
  margin-left: 27px;
  position: relative;
  border: 2px solid #d8dee4;
  border-radius: 10px;
}

.form-head {
  display: flex;
  align-items: flex-end;
  height: 88px;
  padding: 0 22px 0 14px;
  border-radius: 8px 8px 0 0;
  background-color: #f6f8fa;
  border-bottom: 2px solid #d8dee4;
  position: relative;
}

.form-tab {
  display: block;
  height: 74px;
  margin-bottom: -2px;
  padding: 0 28px 0 30px;
  line-height: 74px;
  letter-spacing: 0;
  color: #57606a;
}

.form-tab.active {
  width: 125px;
  padding: 0;
  line-height: 72px;
  text-align: center;
  background-color: #fff;
  color: #24292f;
  border: 2px solid #d8dee4;
  border-bottom: none;
  border-radius: 10px 10px 0 0;
}

.form-tab + .form-tab {
  padding-left: 38px;
}

.md-tools {
  display: flex;
  align-items: center;
  gap: 26.2px;
  height: 88px;
  margin-left: auto;
  padding-top: 12px;
}

.md-tools .wide {
  margin-left: 7px;
}

.md-tools .tool-reply {
  margin-left: 5px;
}

.form-body {
  padding: 14px 14px 0;
}

.comment-input {
  height: 200px;
  padding: 19px 14px;
  border: 2px solid #d8dee4;
  border-radius: 10px;
  background-color: #f6f8fa;
  line-height: 34px;
  color: #57606a;
}

/* sidebar */
.side-item {
  padding: 31px 0 30px;
  border-bottom: 2px solid #d8dee4;
  font-size: 22px;
  letter-spacing: -0.28px;
}

.side-first {
  padding-bottom: 44px;
}

.side-head {
  display: flex;
  align-items: center;
  justify-content: space-between;
  height: 30px;
  font-weight: 600;
  letter-spacing: -0.59px;
  color: #57606a;
}

.side-head .octicon {
  margin-top: 1px;
}

.side-value {
  margin-top: 17px;
  line-height: 34px;
}

.side-value a {
  color: #57606a;
}

.side-draft {
  display: flex;
  justify-content: space-between;
  align-items: center;
  margin-top: 15px;
}

.side-dev {
  margin-top: 15px;
}

.side-none {
  margin-top: 19px;
}
```
